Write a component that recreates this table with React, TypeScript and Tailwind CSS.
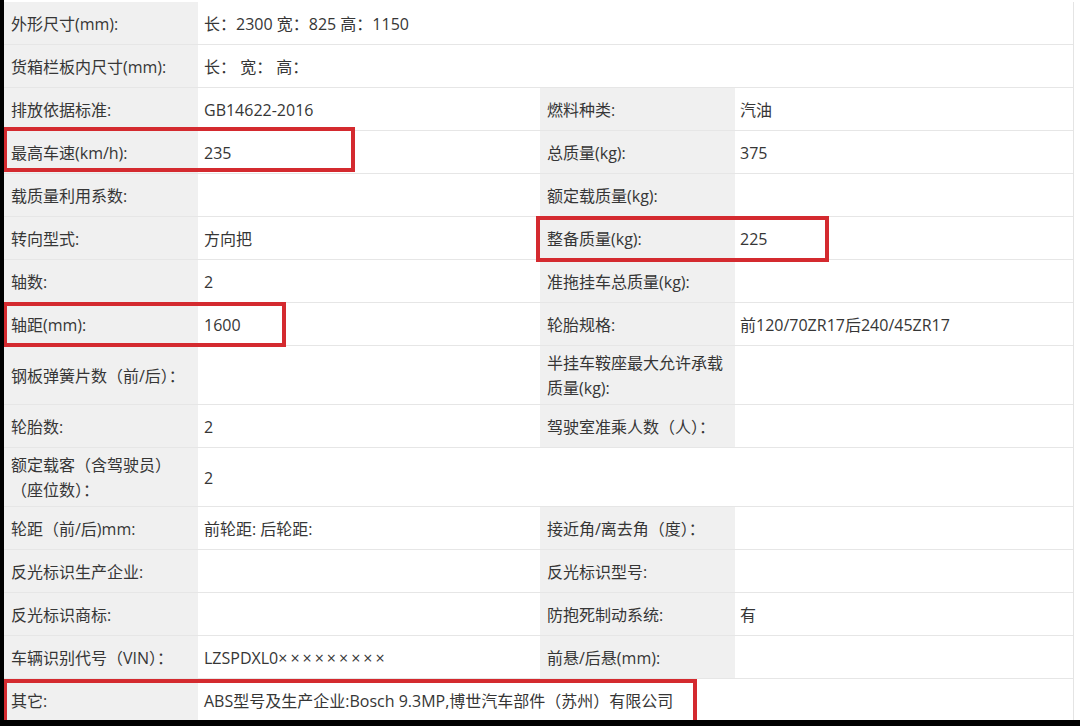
import React from "react";

type Row = {
  l1: React.ReactNode;
  v1?: React.ReactNode;
  l2?: string;
  v2?: string;
  tall?: boolean;
  full?: boolean;
};

const rows: Row[] = [
  { l1: "外形尺寸(mm):", v1: "长：2300 宽：825 高：1150", full: true },
  { l1: "货箱栏板内尺寸(mm):", v1: "长： 宽： 高：", full: true },
  { l1: "排放依据标准:", v1: "GB14622-2016", l2: "燃料种类:", v2: "汽油" },
  { l1: "最高车速(km/h):", v1: "235", l2: "总质量(kg):", v2: "375" },
  { l1: "载质量利用系数:", l2: "额定载质量(kg):" },
  { l1: "转向型式:", v1: "方向把", l2: "整备质量(kg):", v2: "225" },
  { l1: "轴数:", v1: "2", l2: "准拖挂车总质量(kg):" },
  { l1: "轴距(mm):", v1: "1600", l2: "轮胎规格:", v2: "前120/70ZR17后240/45ZR17" },
  { l1: "钢板弹簧片数（前/后）：", l2: "半挂车鞍座最大允许承载质量(kg):", tall: true },
  { l1: "轮胎数:", v1: "2", l2: "驾驶室准乘人数（人）：" },
  {
    l1: (
      <>
        额定载客（含驾驶员）
        <br />
        （座位数）：
      </>
    ),
    v1: "2",
    full: true,
    tall: true,
  },
  { l1: "轮距（前/后)mm:", v1: "前轮距: 后轮距:", l2: "接近角/离去角（度）：" },
  { l1: "反光标识生产企业:", l2: "反光标识型号:" },
  { l1: "反光标识商标:", l2: "防抱死制动系统:", v2: "有" },
  {
    l1: "车辆识别代号（VIN）：",
    v1: (
      <>
        LZSPDXL0<span className="tracking-[3px]">×××××××××</span>
      </>
    ),
    l2: "前悬/后悬(mm):",
  },
  { l1: "其它:", v1: "ABS型号及生产企业:Bosch 9.3MP,博世汽车部件（苏州）有限公司", full: true },
];

function Label({ text, w }: { text: React.ReactNode; w: string }) {
  return (
    <div className={`${w} shrink-0 bg-[#f0f0f0] px-[7px] pt-[2px] flex items-center leading-[25px]`}>
      <span>{text}</span>
    </div>
  );
}

function Value({ text, w }: { text?: React.ReactNode; w: string }) {
  return (
    <div className={`${w} bg-white pl-[6px] pr-2 pt-[2px] flex items-center`}>
      <span>{text}</span>
    </div>
  );
}

export default function App() {
  return (
    <div className="w-[1080px] h-[726px] bg-black overflow-hidden font-['Open_Sans','Noto_Sans_CJK_SC',sans-serif] text-[16px] text-[#363636]">
      <div className="relative ml-[4px] h-[720px] bg-white pt-[2px] overflow-hidden">
        <div className="w-[1070px] border-r border-[#e4e4e4]">
          {rows.map((r, i) => (
            <div
              key={i}
              className={`flex border-b border-[#e6e6e6] ${r.tall ? "h-[59px]" : "h-[43px]"}`}
            >
              <Label text={r.l1} w="w-[194px]" />
              {r.full ? (
                <Value text={r.v1} w="flex-1" />
              ) : (
                <>
                  <Value text={r.v1} w="w-[342px] shrink-0" />
                  <Label text={r.l2 ?? ""} w="w-[195px]" />
                  <Value text={r.v2} w="flex-1 !pl-[5px]" />
                </>
              )}
            </div>
          ))}
        </div>

        {/* red highlight boxes */}
        <div className="absolute left-[-1px] top-[127px] w-[352px] h-[45px] border-[4px] border-[#d42a2f]" />
        <div className="absolute left-[532px] top-[216px] w-[293px] h-[46px] border-[4px] border-[#d42a2f]" />
        <div className="absolute left-[-1px] top-[302px] w-[283px] h-[45px] border-[4px] border-[#d42a2f]" />
        <div className="absolute left-[-1px] top-[679px] w-[694px] h-[46px] border-[4px] border-[#d42a2f]" />
      </div>
    </div>
  );
}
